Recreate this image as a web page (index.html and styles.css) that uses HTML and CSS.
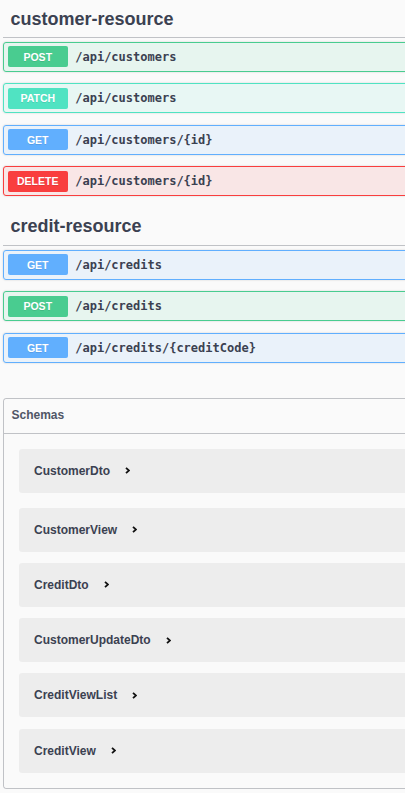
FILE: index.html
```html
<!DOCTYPE html>
<html lang="en">
<head>
<meta charset="utf-8">
<title>Swagger UI</title>
<link rel="stylesheet" href="styles.css">
</head>
<body>
<div class="page">
  <section class="tag-section">
    <h3 class="tag">customer-resource</h3>
    <div class="op op-post"><span class="method">POST</span><span class="path">/api/customers</span></div>
    <div class="op op-patch"><span class="method">PATCH</span><span class="path">/api/customers</span></div>
    <div class="op op-get"><span class="method">GET</span><span class="path">/api/customers/{id}</span></div>
    <div class="op op-delete"><span class="method">DELETE</span><span class="path">/api/customers/{id}</span></div>
  </section>
  <section class="tag-section">
    <h3 class="tag">credit-resource</h3>
    <div class="op op-get"><span class="method">GET</span><span class="path">/api/credits</span></div>
    <div class="op op-post"><span class="method">POST</span><span class="path">/api/credits</span></div>
    <div class="op op-get"><span class="method">GET</span><span class="path">/api/credits/{creditCode}</span></div>
  </section>
  <section class="models">
    <h4 class="models-title">Schemas</h4>
    <div class="model-list">
      <div class="model model-first"><span class="model-name">CustomerDto</span><svg class="chev" viewBox="0 0 5 7" width="5" height="7"><polyline points="1,0.8 4,3.5 1,6.2"/></svg></div>
      <div class="model"><span class="model-name">CustomerView</span><svg class="chev" viewBox="0 0 5 7" width="5" height="7"><polyline points="1,0.8 4,3.5 1,6.2"/></svg></div>
      <div class="model"><span class="model-name">CreditDto</span><svg class="chev" viewBox="0 0 5 7" width="5" height="7"><polyline points="1,0.8 4,3.5 1,6.2"/></svg></div>
      <div class="model"><span class="model-name">CustomerUpdateDto</span><svg class="chev" viewBox="0 0 5 7" width="5" height="7"><polyline points="1,0.8 4,3.5 1,6.2"/></svg></div>
      <div class="model"><span class="model-name">CreditViewList</span><svg class="chev" viewBox="0 0 5 7" width="5" height="7"><polyline points="1,0.8 4,3.5 1,6.2"/></svg></div>
      <div class="model"><span class="model-name">CreditView</span><svg class="chev" viewBox="0 0 5 7" width="5" height="7"><polyline points="1,0.8 4,3.5 1,6.2"/></svg></div>
    </div>
  </section>
</div>
</body>
</html>
```
FILE: styles.css
```css
html, body {
  margin: 0;
  padding: 0;
  background: #fafafa;
  overflow: hidden;
}

.page {
  width: 720px;
  padding-left: 3px;
  font-family: "Liberation Sans", Arial, sans-serif;
  color: #3b4151;
}

.tag {
  margin: 0 0 3.75px;
  padding: 7.5px 15px 7.5px 7.5px;
  font-size: 18px;
  line-height: 22px;
  font-weight: 700;
  color: #3b4151;
  border-bottom: 1px solid rgba(59, 65, 81, 0.3);
}

.op {
  display: flex;
  align-items: center;
  height: 30px;
  box-sizing: border-box;
  padding: 0 3.75px;
  margin-bottom: 11.5px;
  border: 1px solid;
  border-radius: 3px;
  box-shadow: 0 0 2px rgba(0, 0, 0, 0.19);
}

.method {
  display: flex;
  align-items: center;
  justify-content: center;
  width: 60px;
  height: 21px;
  border-radius: 2px;
  color: #fff;
  font-size: 10.5px;
  font-weight: 700;
  text-shadow: 0 1px 0 rgba(0, 0, 0, 0.1);
}

.path {
  margin-left: 7.5px;
  font-family: "DejaVu Sans Mono", monospace;
  font-size: 12px;
  font-weight: 700;
  color: #3b4151;
}

.op-post { border-color: #49cc90; background: rgba(73, 204, 144, 0.1); }
.op-post .method { background: #49cc90; }
.op-patch { border-color: #50e3c2; background: rgba(80, 227, 194, 0.1); }
.op-patch .method { background: #50e3c2; }
.op-get { border-color: #61affe; background: rgba(97, 175, 254, 0.1); }
.op-get .method { background: #61affe; }
.op-delete { border-color: #f93e3e; background: rgba(249, 62, 62, 0.1); }
.op-delete .method { background: #f93e3e; }

.models {
  margin-top: 35px;
  border: 1px solid rgba(59, 65, 81, 0.3);
  border-radius: 3px;
}

.models-title {
  margin: 0;
  padding: 7.5px 15px 7.5px 7.5px;
  font-size: 12px;
  line-height: 19px;
  font-weight: 700;
  color: #505666;
  border-bottom: 1px solid rgba(59, 65, 81, 0.3);
}

.model-list {
  padding: 15px 15px 3.75px;
}

.model {
  display: flex;
  align-items: center;
  height: 44px;
  padding-left: 15px;
  margin-bottom: 11.25px;
  background: rgba(0, 0, 0, 0.05);
  border-radius: 3px;
}

.model-first {
  margin-bottom: 15px;
}

.model-name {
  font-size: 12px;
  font-weight: 700;
  color: #3b4151;
}

.chev {
  margin-left: 15px;
  fill: none;
  stroke: #111;
  stroke-width: 1.8;
}
```
